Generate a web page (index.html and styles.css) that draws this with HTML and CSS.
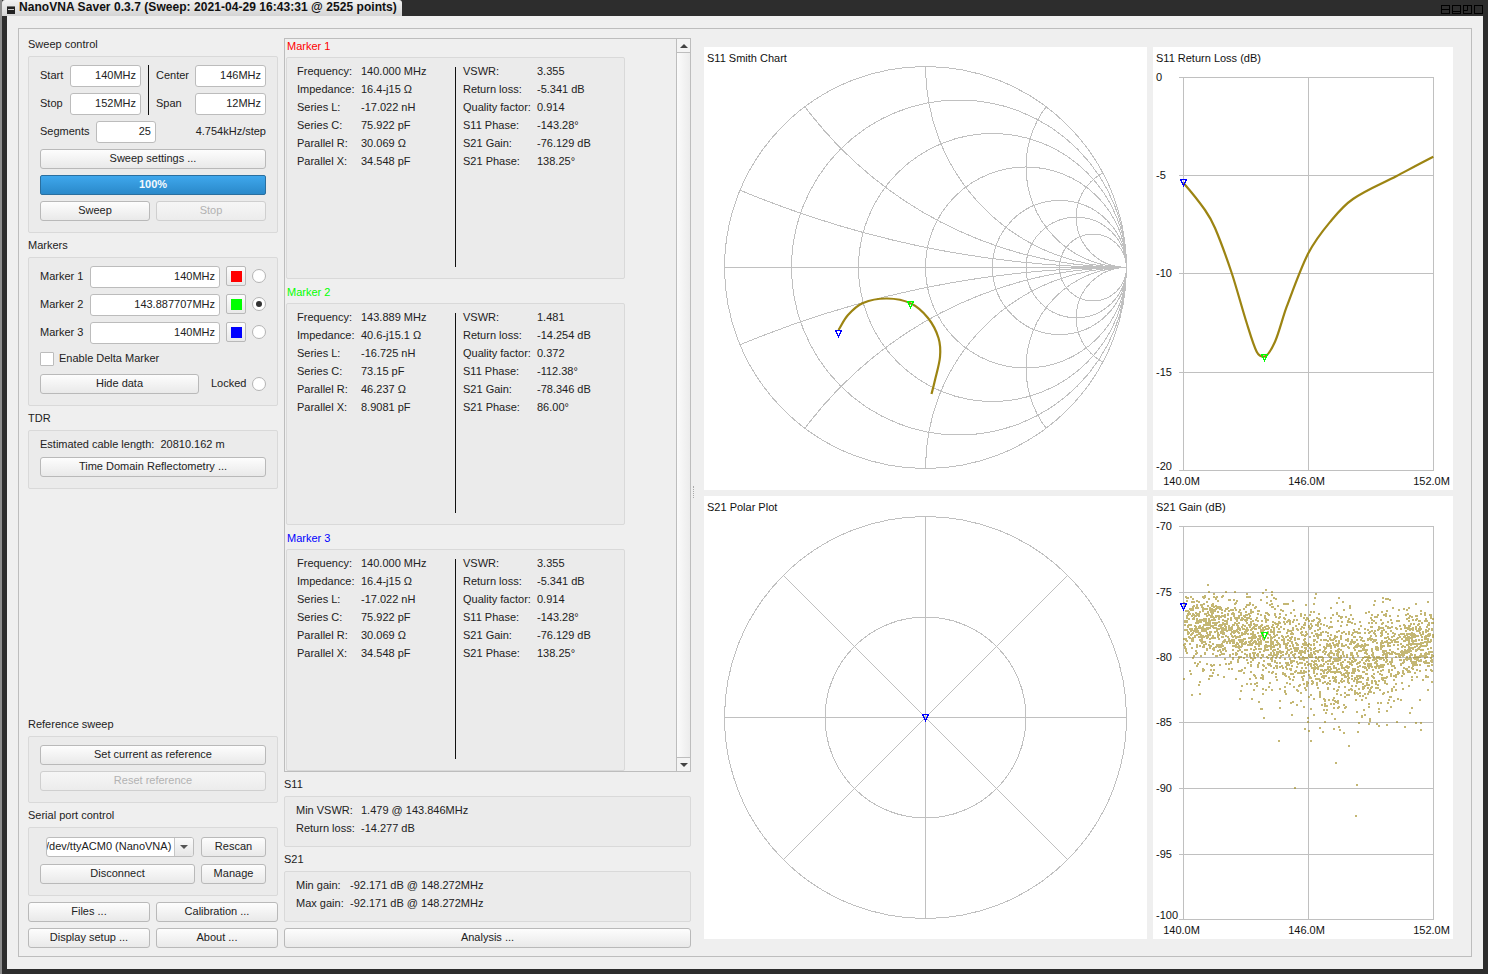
FILE: index.html
```html
<!DOCTYPE html>
<html lang="en">
<head>
<meta charset="utf-8">
<title>NanoVNA Saver</title>
<link rel="stylesheet" href="styles.css">
</head>
<body>
<div class="window">
  <header class="titlebar">
    <div class="title-tab">
      <svg class="win-menu" width="8" height="8" viewBox="0 0 8 8"><rect width="8" height="8" fill="#222"/><path d="M1 3.5H7" stroke="#ccc" stroke-width="1"/><path d="M0 0.5H8" stroke="#777" stroke-width="1"/></svg>
      <span class="title-text">NanoVNA Saver 0.3.7 (Sweep: 2021-04-29 16:43:31 @ 2525 points)</span>
    </div>
    <div class="win-buttons">
      <svg width="9" height="9" viewBox="0 0 9 9"><rect x="0.5" y="0.5" width="8" height="8" fill="none" stroke="#000"/><path d="M0 4.5H9" stroke="#000"/></svg>
      <svg width="9" height="9" viewBox="0 0 9 9"><rect x="0.5" y="0.5" width="8" height="8" fill="none" stroke="#000"/><path d="M0 6.5H9" stroke="#000"/></svg>
      <svg width="9" height="9" viewBox="0 0 9 9"><rect x="0.5" y="0.5" width="8" height="8" fill="none" stroke="#000"/><path d="M0.5 5.5H4.5V0.5" fill="none" stroke="#000"/></svg>
      <svg width="9" height="9" viewBox="0 0 9 9"><rect x="0.5" y="0.5" width="8" height="8" fill="none" stroke="#000"/></svg>
    </div>
  </header>
  <main class="client">
    <div class="frame">
      <section class="col-left">
        <div class="section-label">Sweep control</div>
        <div class="group">
          <div class="sweep-grid">
            <span class="lbl up">Start</span><div class="field">140MHz</div>
            <div class="vdivider"></div>
            <span class="lbl up">Center</span><div class="field">146MHz</div>
            <span class="lbl up">Stop</span><div class="field">152MHz</div>
            <span class="lbl up">Span</span><div class="field">12MHz</div>
          </div>
          <div class="row seg-row">
            <span class="lbl up seg-lbl">Segments</span><div class="field seg-field">25</div><span class="lbl up step">4.754kHz/step</span>
          </div>
          <div class="btn">Sweep settings ...</div>
          <div class="progress">100%</div>
          <div class="row btn-pair"><div class="btn grow">Sweep</div><div class="btn grow disabled">Stop</div></div>
        </div>

        <div class="section-label next">Markers</div>
        <div class="group markers">
          <div class="row marker-row"><span class="lbl up mk-lbl">Marker 1</span><div class="field mk-field">140MHz</div><div class="swatch"><i class="sq red"></i></div><span class="radio"></span></div>
          <div class="row marker-row"><span class="lbl up mk-lbl">Marker 2</span><div class="field mk-field">143.887707MHz</div><div class="swatch"><i class="sq green"></i></div><span class="radio on"></span></div>
          <div class="row marker-row"><span class="lbl up mk-lbl">Marker 3</span><div class="field mk-field">140MHz</div><div class="swatch"><i class="sq blue"></i></div><span class="radio"></span></div>
          <div class="row check-row"><span class="check"></span><span class="lbl up">Enable Delta Marker</span></div>
          <div class="row hide-row"><div class="btn hide-btn">Hide data</div><span class="lbl up locked">Locked</span><span class="radio"></span></div>
        </div>

        <div class="section-label next">TDR</div>
        <div class="group">
          <div class="lbl tdr-text">Estimated cable length:&nbsp; 20810.162 m</div>
          <div class="btn">Time Domain Reflectometry ...</div>
        </div>

        <div class="spacer"></div>

        <div class="section-label">Reference sweep</div>
        <div class="group">
          <div class="btn">Set current as reference</div>
          <div class="btn disabled">Reset reference</div>
        </div>

        <div class="section-label next">Serial port control</div>
        <div class="group serial">
          <div class="row serial-top">
            <div class="combo"><span class="combo-text">/dev/ttyACM0 (NanoVNA)</span><span class="combo-arrow"><i></i></span></div>
            <div class="btn side-btn">Rescan</div>
          </div>
          <div class="row"><div class="btn grow">Disconnect</div><div class="btn side-btn">Manage</div></div>
        </div>

        <div class="bottom-btns">
          <div class="btn">Files ...</div><div class="btn">Calibration ...</div>
          <div class="btn">Display setup ...</div><div class="btn">About ...</div>
        </div>
      </section>

      <section class="col-center">
        <div class="scroll">
          <div class="scroll-body">
            <div class="mk-title t-red">Marker 1</div>
            <div class="mk-box">
              <div class="mk-col c1">
                <span>Frequency:</span><span>140.000 MHz</span><span>Impedance:</span><span>16.4-j15 Ω</span><span>Series L:</span><span>-17.022 nH</span><span>Series C:</span><span>75.922 pF</span><span>Parallel R:</span><span>30.069 Ω</span><span>Parallel X:</span><span>34.548 pF</span>
              </div>
              <div class="mk-sep"></div>
              <div class="mk-col c2">
                <span>VSWR:</span><span>3.355</span><span>Return loss:</span><span>-5.341 dB</span><span>Quality factor:</span><span>0.914</span><span>S11 Phase:</span><span>-143.28°</span><span>S21 Gain:</span><span>-76.129 dB</span><span>S21 Phase:</span><span>138.25°</span>
              </div>
            </div>
            <div class="mk-title t-green">Marker 2</div>
            <div class="mk-box">
              <div class="mk-col c1">
                <span>Frequency:</span><span>143.889 MHz</span><span>Impedance:</span><span>40.6-j15.1 Ω</span><span>Series L:</span><span>-16.725 nH</span><span>Series C:</span><span>73.15 pF</span><span>Parallel R:</span><span>46.237 Ω</span><span>Parallel X:</span><span>8.9081 pF</span>
              </div>
              <div class="mk-sep"></div>
              <div class="mk-col c2">
                <span>VSWR:</span><span>1.481</span><span>Return loss:</span><span>-14.254 dB</span><span>Quality factor:</span><span>0.372</span><span>S11 Phase:</span><span>-112.38°</span><span>S21 Gain:</span><span>-78.346 dB</span><span>S21 Phase:</span><span>86.00°</span>
              </div>
            </div>
            <div class="mk-title t-blue">Marker 3</div>
            <div class="mk-box">
              <div class="mk-col c1">
                <span>Frequency:</span><span>140.000 MHz</span><span>Impedance:</span><span>16.4-j15 Ω</span><span>Series L:</span><span>-17.022 nH</span><span>Series C:</span><span>75.922 pF</span><span>Parallel R:</span><span>30.069 Ω</span><span>Parallel X:</span><span>34.548 pF</span>
              </div>
              <div class="mk-sep"></div>
              <div class="mk-col c2">
                <span>VSWR:</span><span>3.355</span><span>Return loss:</span><span>-5.341 dB</span><span>Quality factor:</span><span>0.914</span><span>S11 Phase:</span><span>-143.28°</span><span>S21 Gain:</span><span>-76.129 dB</span><span>S21 Phase:</span><span>138.25°</span>
              </div>
            </div>
          </div>
          <div class="scrollbar">
            <div class="sb-btn"><i class="arrow-up"></i></div>
            <div class="sb-track"></div>
            <div class="sb-btn sb-end"><i class="arrow-down"></i></div>
          </div>
        </div>
        <div class="section-label next">S11</div>
        <div class="group summary">
          <div class="sum-grid s11"><span>Min VSWR:</span><span>1.479 @ 143.846MHz</span><span>Return loss:</span><span>-14.277 dB</span></div>
        </div>
        <div class="section-label next">S21</div>
        <div class="group summary">
          <div class="sum-grid s21"><span>Min gain:</span><span>-92.171 dB @ 148.272MHz</span><span>Max gain:</span><span>-92.171 dB @ 148.272MHz</span></div>
        </div>
        <div class="btn analysis">Analysis ...</div>
      </section>

      <div class="splitter"><i></i></div>

      <section class="charts">
        <svg class="chart" width="443" height="443" viewBox="704 47 443 443">
          <defs><clipPath id="smith-clip"><circle cx="925.5" cy="267.5" r="201"/></clipPath></defs>
          <text class="chart-text" x="707" y="62">S11 Smith Chart</text>
          <g class="grid crisp">
            <circle cx="925.5" cy="267.5" r="201"/>
            <path d="M724.5 267.5H1126.5"/>
            <circle cx="959" cy="267.5" r="167.5"/>
            <circle cx="992.5" cy="267.5" r="134"/>
            <circle cx="1026" cy="267.5" r="100.5"/>
            <circle cx="1059.5" cy="267.5" r="67"/>
            <circle cx="1076.25" cy="267.5" r="50.25"/>
            <circle cx="1093" cy="267.5" r="33.5"/>
            <g clip-path="url(#smith-clip)">
              <circle cx="1126.5" cy="66.5" r="201"/><circle cx="1126.5" cy="468.5" r="201"/>
              <circle cx="1126.5" cy="-134.5" r="402"/><circle cx="1126.5" cy="669.5" r="402"/>
              <circle cx="1126.5" cy="-737.5" r="1005"/><circle cx="1126.5" cy="1272.5" r="1005"/>
              <circle cx="1126.5" cy="167" r="100.5"/><circle cx="1126.5" cy="368" r="100.5"/>
              <circle cx="1126.5" cy="217.25" r="50.25"/><circle cx="1126.5" cy="317.75" r="50.25"/>
            </g>
          </g>
          <path class="trace" d="M838.5 330C841.7 325 843.9 319.5 848 315C852.1 310.5 856.5 305.75 863 303C869.5 300.25 879 298.4 887 298.5C895 298.6 904.2 300.25 911 303.5C917.8 306.75 923.4 312.25 928 318C932.6 323.75 936.5 331.5 938.5 338C940.5 344.5 940.6 350 940 357C939.4 364 936.4 373.8 935 380C933.6 386.2 932.7 389.3 931.5 394"/>
          <path class="mk mk-b" d="M835.5 330.5h6l-3 6z"/>
          <path class="mk mk-g" d="M907.5 301.5h6l-3 6z"/>
        </svg>

        <svg class="chart" width="300" height="443" viewBox="1153 47 300 443">
          <text class="chart-text" x="1156" y="62">S11 Return Loss (dB)</text>
          <g class="grid crisp">
            <path d="M1183.5 77V471M1308.5 77V471M1433.5 77V471"/>
            <path d="M1179 77.5H1433.5M1179 175.5H1433.5M1179 273.5H1433.5M1179 372.5H1433.5M1179 470.5H1433.5"/>
          </g>
          <text class="chart-text" x="1156" y="81">0</text>
          <text class="chart-text" x="1156" y="179">-5</text>
          <text class="chart-text" x="1156" y="277">-10</text>
          <text class="chart-text" x="1156" y="376">-15</text>
          <text class="chart-text" x="1156" y="470">-20</text>
          <text class="chart-text mid" x="1181.5" y="485">140.0M</text>
          <text class="chart-text mid" x="1306.5" y="485">146.0M</text>
          <text class="chart-text mid" x="1431.5" y="485">152.0M</text>
          <path class="trace" d="M1183.3 182.7C1190.5 191 1197.8 199.7 1205 210C1208.3 214.8 1211.7 220.1 1215 228C1220.6 241.1 1226.1 256.3 1231.7 273C1236.7 288 1241.7 307.3 1246.7 323C1250 333.5 1253.4 345.2 1256.7 351.7C1259.1 356.4 1261.6 356.7 1264 356.7C1267.7 356.7 1271.3 349.8 1275 341.7C1278.9 333.1 1282.8 317 1286.7 306.7C1293.9 287.6 1301.1 267.2 1308.3 253.3C1316.1 238.3 1323.9 229.4 1331.7 220C1338.8 211.4 1345.9 203.8 1353 199C1367.6 189.1 1382.1 183.7 1396.7 176C1408.9 169.5 1421.1 162.8 1433.3 156.7"/>
          <path class="mk mk-b" d="M1180.5 179.5h6l-3 6z"/>
          <path class="mk mk-g" d="M1261.5 354.5h6l-3 6z"/>
        </svg>

        <svg class="chart" width="443" height="443" viewBox="704 496 443 443">
          <text class="chart-text" x="707" y="511">S21 Polar Plot</text>
          <g class="grid crisp">
            <circle cx="925.5" cy="717.5" r="201"/>
            <circle cx="925.5" cy="717.5" r="100.5"/>
            <path d="M724.5 717.5H1126.5M925.5 516.5V918.5M783.4 575.4L1067.6 859.6M1067.6 575.4L783.4 859.6"/>
          </g>
          <path class="mk mk-b" d="M922.5 714.5h6l-3 6z"/>
        </svg>

        <svg class="chart" width="300" height="443" viewBox="1153 496 300 443">
          <text class="chart-text" x="1156" y="511">S21 Gain (dB)</text>
          <g class="grid crisp">
            <path d="M1183.5 526V920M1308.5 526V920M1433.5 526V920"/>
            <path d="M1179 526.5H1433.5M1179 592.5H1433.5M1179 657.5H1433.5M1179 722.5H1433.5M1179 788.5H1433.5M1179 854.5H1433.5M1179 919.5H1433.5"/>
          </g>
          <text class="chart-text" x="1156" y="530">-70</text>
          <text class="chart-text" x="1156" y="596">-75</text>
          <text class="chart-text" x="1156" y="661">-80</text>
          <text class="chart-text" x="1156" y="726">-85</text>
          <text class="chart-text" x="1156" y="792">-90</text>
          <text class="chart-text" x="1156" y="858">-95</text>
          <text class="chart-text" x="1156" y="919">-100</text>
          <text class="chart-text mid" x="1181.5" y="934">140.0M</text>
          <text class="chart-text mid" x="1306.5" y="934">146.0M</text>
          <text class="chart-text mid" x="1431.5" y="934">152.0M</text>
          <path class="dots" id="gain-dots" d=""/>
          <path class="mk mk-b" d="M1180.5 603.5h6l-3 6z"/>
          <path class="mk mk-g" d="M1261.5 632.5h6l-3 6z"/>
        </svg>
      </section>
    </div>
  </main>
</div>
<script src="app.js"></script>
</body>
</html>
```
FILE: styles.css
```css
* { box-sizing: border-box; }
html, body { margin: 0; padding: 0; background: #fff; }
body { font: 11px/12px "Liberation Sans", Arial, sans-serif; color: #222; }

.window { width: 1488px; height: 974px; background: #2d2d2d; border-left: 2px solid #8c8c8c; display: flex; flex-direction: column; }
.titlebar { height: 16px; display: flex; justify-content: space-between; flex: none; }
.title-tab {
  width: 400px; height: 16px; display: flex; align-items: center; gap: 4px; padding: 0 0 0 5px;
  background: linear-gradient(#f2f2f2, #d4d4d4); border-radius: 3px 3px 0 0; color: #111;
}
.win-menu { flex: none; margin-top: 4px; }
.title-text { font: bold 12px/14px "Liberation Sans", Arial, sans-serif; letter-spacing: 0.05px; white-space: nowrap; margin-top: -3px; }
.win-buttons { display: flex; gap: 2px; padding: 5px 5px 0 0; }

.client { flex: 1; margin: 0 5px 5px 5px; background: #efefef; padding: 12px 11px; display: flex; min-height: 0; }
.frame {
  flex: 1; border: 1px solid #bdbdbd; padding: 9px 18px 8px 9px;
  display: flex; align-items: stretch; min-height: 0;
}

.col-left { width: 250px; flex: none; display: flex; flex-direction: column; }
.col-center { width: 407px; flex: none; margin-left: 6px; display: flex; flex-direction: column; }
.splitter { width: 13px; flex: none; display: flex; align-items: center; justify-content: center; padding: 0 8px 2px 0; }
.splitter i { display: block; width: 0; height: 12px; border-left: 1px dotted #aaa; }

.section-label { height: 12px; margin-bottom: 6px; flex: none; }
.section-label.next { margin-top: 6px; }
.spacer { flex: 1; }

.group {
  flex: none; background: #ebebeb; border: 1px solid #d9d9d9; border-radius: 2px;
  padding: 8px 11px 11px; display: flex; flex-direction: column; gap: 6px;
}
.row { display: flex; align-items: center; gap: 6px; }
.lbl { white-space: nowrap; }
.lbl.up { margin-top: -2px; }
.tdr-text { margin: -1px 0 1px; }
.grow { flex: 1; }

.field {
  height: 22px; line-height: 18px; background: #fff; border: 1px solid #bcbcbc; border-radius: 3px;
  text-align: right; padding-right: 4px; white-space: nowrap;
}
.sweep-grid { display: grid; grid-template-columns: 30px 71px 15px 39px 71px; grid-template-rows: 22px 22px; row-gap: 6px; align-items: center; }
.vdivider { grid-column: 3; grid-row: 1 / span 2; width: 1px; height: 50px; background: #111; justify-self: center; margin-left: -1px; }
.seg-row { gap: 0; }
.seg-lbl { width: 56px; }
.seg-field { width: 60px; }
.step { margin-left: auto; }

.btn {
  height: 20px; line-height: 17px; text-align: center; white-space: nowrap; flex: none;
  background: linear-gradient(#fdfdfd, #e9e9e9); border: 1px solid #b9b9b9; border-radius: 3px; color: #222;
}
.btn.grow { flex: 1; }
.btn.disabled { color: #b2b2b2; background: linear-gradient(#f6f6f6, #ececec); border-color: #cfcfcf; }
.progress {
  height: 20px; line-height: 17px; text-align: center; color: #f4f9fd; font-weight: bold;
  background: linear-gradient(#3fa7ec, #2a89ca); border: 1px solid #2a6f9f; border-radius: 2px;
}

.markers { gap: 6px; padding-bottom: 11px; }
.marker-row { height: 22px; gap: 6px; }
.mk-lbl { width: 44px; }
.mk-field { width: 130px; }
.swatch {
  width: 20px; height: 20px; margin-top: -2px; display: flex; align-items: center; justify-content: center;
  background: linear-gradient(#fdfdfd, #e9e9e9); border: 1px solid #b9b9b9; border-radius: 2px;
}
.sq { display: block; width: 11px; height: 11px; }
.sq.red { background: #f00; }
.sq.green { background: #0f0; }
.sq.blue { background: #00f; }
.radio {
  display: block; width: 14px; height: 14px; border-radius: 50%; background: #fff; border: 1px solid #b4b4b4; flex: none; position: relative;
}
.marker-row .radio { margin-top: -2px; }
.radio.on::after {
  content: ""; position: absolute; left: 3px; top: 3px; width: 6px; height: 6px; border-radius: 50%; background: #333;
}
.check-row { height: 14px; margin-top: 2px; gap: 5px; }
.check { display: block; width: 14px; height: 14px; background: #fff; border: 1px solid #bcbcbc; border-radius: 1px; }
.hide-row { margin-top: 2px; gap: 0; }
.hide-btn { width: 159px; }
.locked { margin-left: 12px; margin-right: 6px; width: 35px; }

.serial { padding-top: 9px; gap: 7px; }
.serial-top { padding-left: 6px; gap: 7px; }
.combo {
  width: 148px; height: 20px; display: flex; background: #fff; border: 1px solid #bcbcbc; border-radius: 3px; overflow: hidden;
}
.combo-text { flex: 1; line-height: 17px; overflow: hidden; white-space: nowrap; min-width: 0; text-indent: -1px; }
.combo-arrow {
  width: 19px; flex: none; border-left: 1px solid #c6c6c6; background: linear-gradient(#fbfbfb, #e6e6e6);
  display: flex; align-items: center; justify-content: center;
}
.combo-arrow i { display: block; width: 0; height: 0; border: 4px solid transparent; border-top: 4px solid #555; border-bottom: 0; }
.side-btn { width: 65px; }

.bottom-btns { margin-top: 6px; display: grid; grid-template-columns: 122px 122px; gap: 6px; flex: none; }

.scroll { height: 734px; flex: none; border: 1px solid #bdbdbd; display: flex; background: #efefef; }
.scroll-body { flex: 1; padding: 1px 0 0 1px; min-width: 0; }
.mk-title { height: 12px; margin: 0 0 5px 1px; }
.mk-box + .mk-title { margin-top: 7px; }
.t-red { color: #f00; }
.t-green { color: #0f0; }
.t-blue { color: #00f; }
.mk-box {
  width: 339px; height: 222px; background: #ebebeb; border: 1px solid #d9d9d9; border-radius: 2px;
  padding: 7px 0 0 10px; display: flex; align-items: flex-start;
}
.mk-col { display: grid; row-gap: 6px; white-space: nowrap; }
.mk-col.c1 { grid-template-columns: 64px 94px; }
.mk-col.c2 { grid-template-columns: 74px auto; margin-left: 7px; }
.mk-sep { width: 1px; height: 200px; margin-top: 2px; background: #111; }
.scrollbar { width: 14px; flex: none; border-left: 1px solid #bdbdbd; display: flex; flex-direction: column; }
.sb-btn { height: 14px; flex: none; border-bottom: 1px solid #bdbdbd; background: #f4f4f4; display: flex; align-items: center; justify-content: center; }
.sb-end { border-bottom: 0; border-top: 1px solid #bdbdbd; }
.sb-track { flex: 1; background: linear-gradient(90deg, #fbfbfb, #ececec); }
.arrow-up { display: block; width: 0; height: 0; border: 4px solid transparent; border-bottom: 4px solid #444; border-top: 0; }
.arrow-down { display: block; width: 0; height: 0; border: 4px solid transparent; border-top: 4px solid #444; border-bottom: 0; }

.summary { padding: 7px 11px 12px; }
.sum-grid { display: grid; row-gap: 6px; white-space: nowrap; }
.s11 { grid-template-columns: 65px auto; }
.s21 { grid-template-columns: 54px auto; }
.analysis { margin-top: 6px; }

.charts { display: grid; grid-template-columns: 443px 300px; grid-template-rows: 443px 443px; gap: 6px; margin-top: 9px; flex: none; align-content: start; }
.chart { display: block; background: #fff; }
.chart-text { font: 11px "Liberation Sans", Arial, sans-serif; fill: #111; }
.chart-text.mid { text-anchor: middle; }
.grid { fill: none; stroke: #c0c0c0; stroke-width: 1; }
.crisp { shape-rendering: crispEdges; }
.trace { fill: none; stroke: #9c8412; stroke-width: 2.2; }
.mk { fill: none; stroke-width: 1; shape-rendering: crispEdges; }
.mk-b { stroke: #00f; }
.mk-g { stroke: #0f0; }
.dots { fill: #a08a1e; fill-opacity: 0.62; shape-rendering: crispEdges; }
```
FILE: app.js
```js
// Scatter of the 2525 S21 gain points.
(function () {
  var seed = 20210429;
  function rnd() {
    seed = (seed * 1664525 + 1013904223) % 4294967296;
    return seed / 4294967296;
  }
  function gauss() {
    return (rnd() + rnd() + rnd() + rnd() + rnd() + rnd() - 3) / 0.707;
  }
  var knots = [[1183, 622, 15], [1230, 628, 16], [1264, 636, 19], [1308, 650, 23], [1345, 661, 24], [1380, 650, 21], [1433, 640, 15]];
  function at(x, i) {
    for (var k = 1; k < knots.length; k++) {
      if (x <= knots[k][0]) {
        var a = knots[k - 1], b = knots[k], t = (x - a[0]) / (b[0] - a[0]);
        return a[i] + (b[i] - a[i]) * t;
      }
    }
    return knots[knots.length - 1][i];
  }
  var d = [];
  function dot(x, y) { d.push("M" + x + " " + y + "h2v2h-2z"); }
  for (var n = 0; n < 2525; n++) {
    var x = 1183 + 249 * rnd();
    var y = at(x, 1) + gauss() * at(x, 2);
    if (rnd() < 0.14) { y += rnd() * 50; }
    if (y < 590) { y = 590 + rnd() * 30; }
    if (y > 745) { y = 640 + rnd() * 60; }
    dot(Math.round(x), Math.round(y));
  }
  [[1207, 584], [1265, 589], [1278, 740], [1294, 787], [1356, 784], [1355, 815], [1335, 762], [1348, 745], [1260, 708], [1183, 678], [1415, 722]].forEach(function (p) {
    dot(p[0], p[1]);
  });
  document.getElementById("gain-dots").setAttribute("d", d.join(""));
})();
```
